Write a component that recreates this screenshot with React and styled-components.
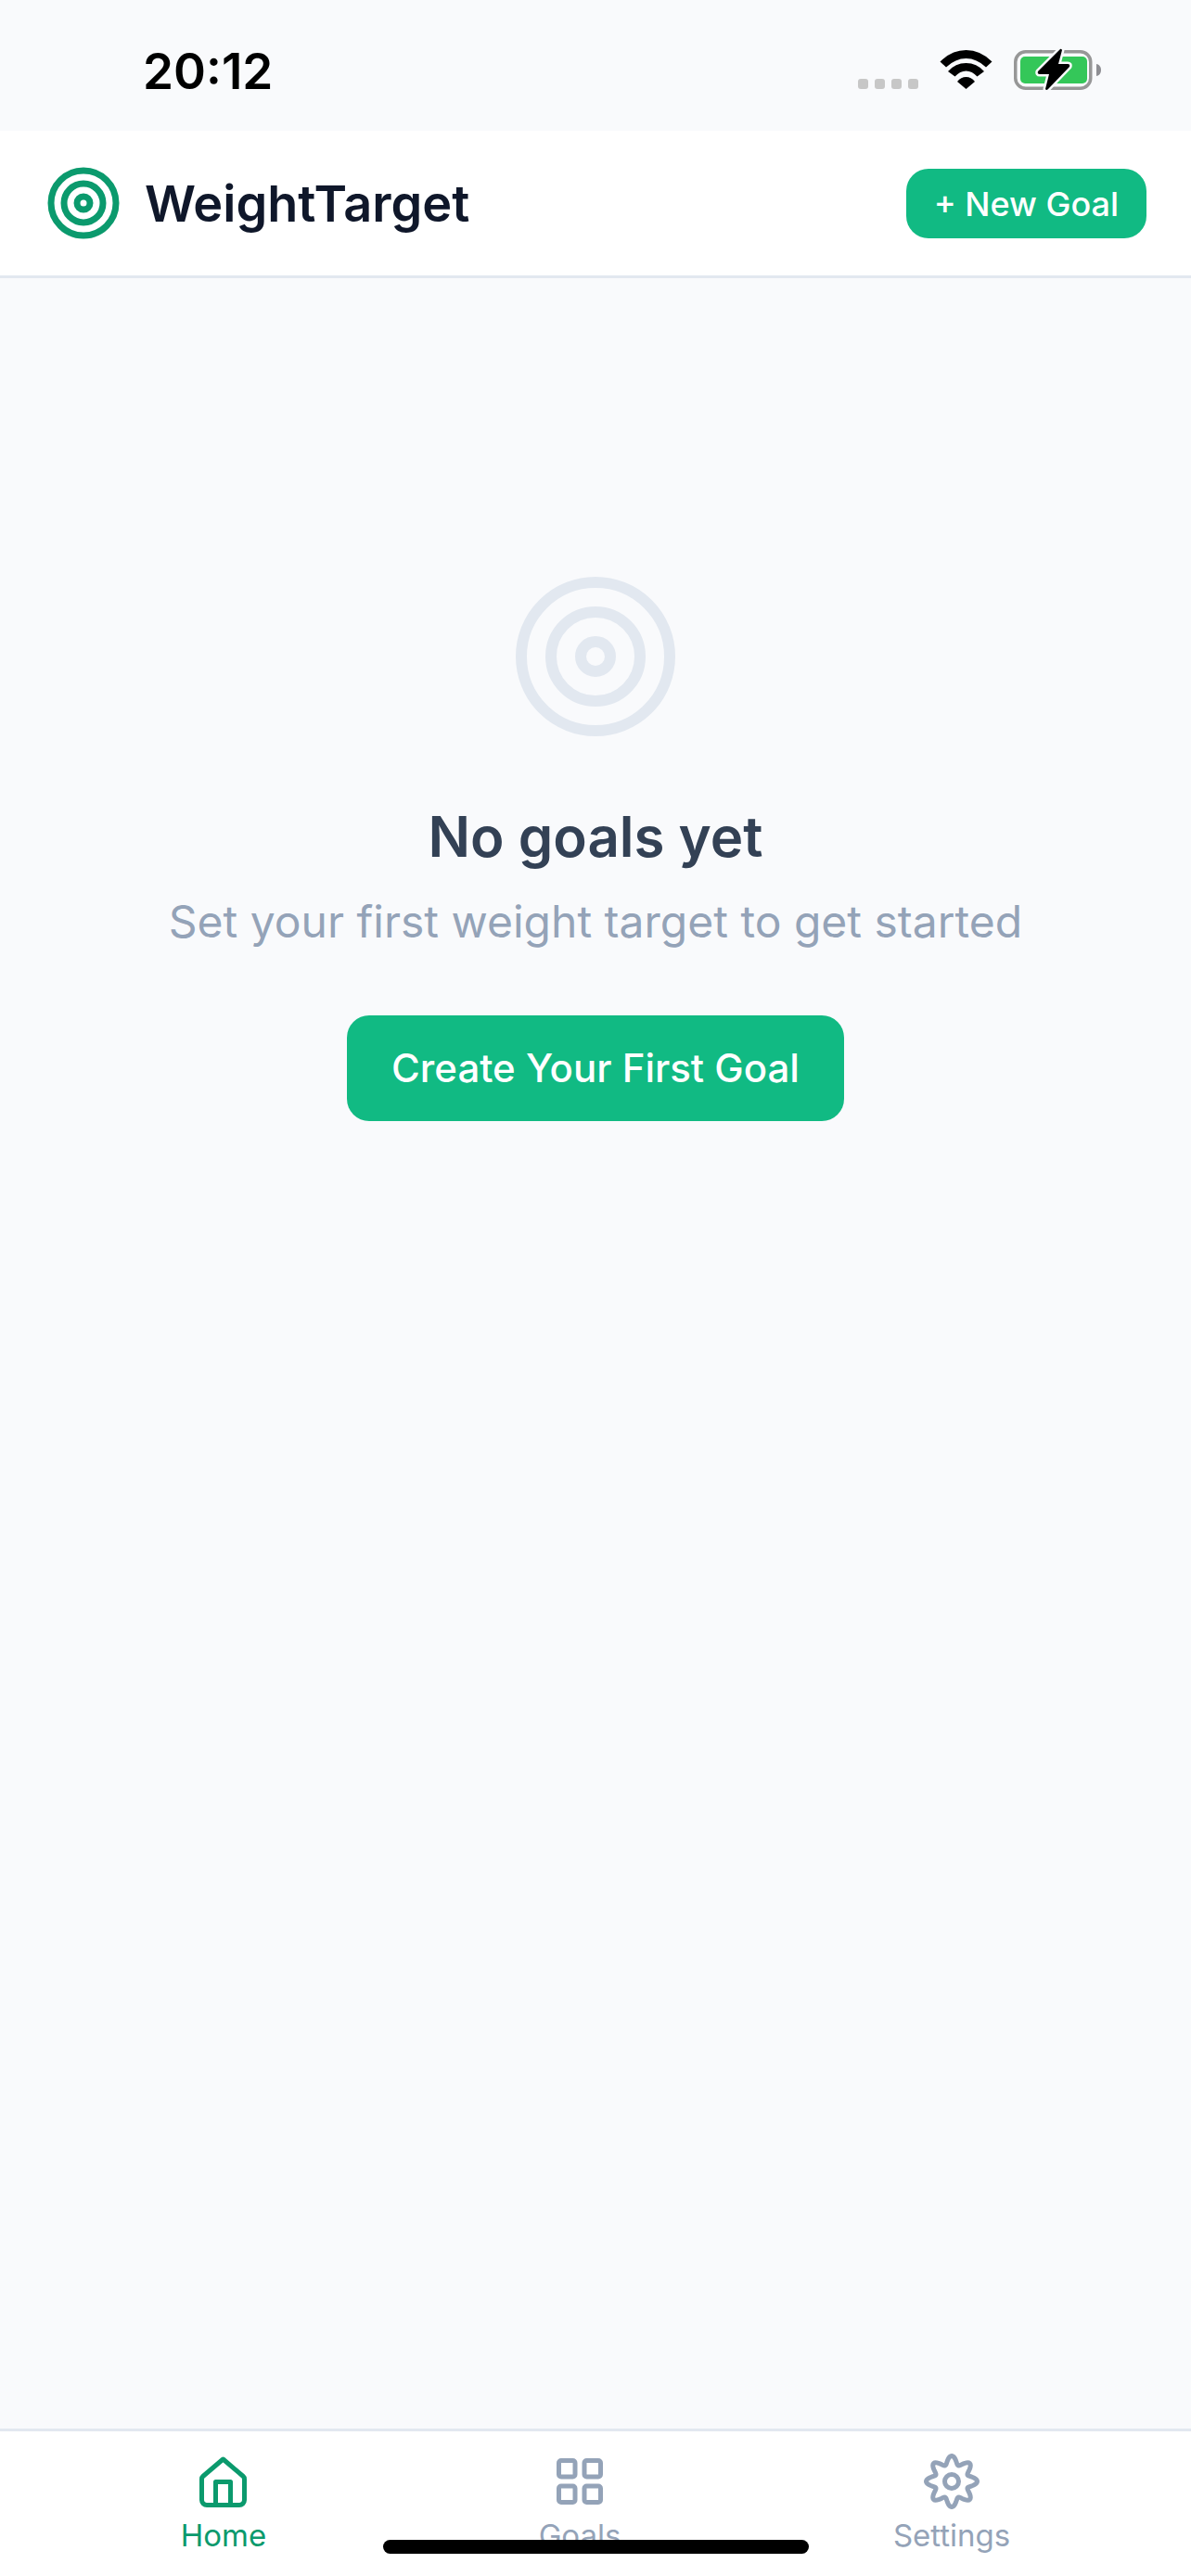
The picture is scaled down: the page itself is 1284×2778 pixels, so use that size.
import React from 'react'
import styled, { createGlobalStyle } from 'styled-components'
import { Target, LayoutGrid } from 'lucide-react'

const GlobalStyle = createGlobalStyle`
html, body {
    margin: 0;
    padding: 0;
    background: #f9fafc;
}
body {
    font-family: Inter, "Liberation Sans", sans-serif;
}
`

const Screen = styled.div`
position: relative;
display: flex;
flex-direction: column;
width: 1284px;
height: 2778px;
overflow: hidden;
background: #f9fafc;
`

const StatusBar = styled.div`
display: flex;
align-items: flex-start;
justify-content: space-between;
height: 141px;
box-sizing: border-box;
padding: 46px 97px 0 154px;
`

const Clock = styled.span`
font-size: 53px;
line-height: 62px;
font-weight: 600;
color: #000;
`

const StatusIcons = styled.div`
display: flex;
align-items: flex-end;
padding-top: 5px;
`

const Dots = styled.div`
display: flex;
gap: 7px;
margin-right: 23px;
margin-bottom: 2px;
`

const Dot = styled.i`
display: block;
width: 11px;
height: 11px;
border-radius: 3px;
background: #c7c7c7;
`

const WifiIcon = styled.svg`
margin-right: 23px;
margin-bottom: 2px;
`

const Header = styled.header`
display: flex;
align-items: center;
justify-content: space-between;
height: 159px;
box-sizing: border-box;
padding: 0 48px;
background: #fff;
border-bottom: 3px solid #e2e8f0;
`

const Brand = styled.div`
display: flex;
align-items: center;
gap: 24px;
`

const BrandName = styled.h1`
margin: 0;
padding-top: 2px;
font-size: 54px;
line-height: 64px;
font-weight: 600;
color: #0f172a;
`

const Button = styled.button`
border: 0;
background: #11ba83;
color: #fff;
font-family: inherit;
font-weight: 500;
font-size: ${p => p.$big ? '42px' : '36px'};
line-height: ${p => p.$big ? '54px' : '45px'};
padding: ${p => p.$big ? '30px 48px' : '16px 30px 14px'};
border-radius: 24px;
`

const Main = styled.main`
flex: 1;
display: flex;
flex-direction: column;
align-items: center;
padding-top: 312px;
`

const EmptyTitle = styled.h2`
margin: 62px 0 0;
font-size: 60px;
line-height: 72px;
font-weight: 600;
color: #334155;
`

const EmptyText = styled.p`
margin: 26px 0 71px;
font-size: 48px;
line-height: 60px;
font-weight: 400;
color: #94a3b8;
`

const TabBar = styled.nav`
display: flex;
justify-content: space-around;
height: 159px;
box-sizing: border-box;
padding: 24px 48px 0;
background: #fff;
border-top: 3px solid #e2e8f0;
`

const Tab = styled.div`
display: flex;
flex-direction: column;
align-items: center;
color: ${p => p.$active ? '#0b9a6d' : '#94a3b8'};
`

const TabIcon = styled.div`
display: flex;
align-items: center;
justify-content: center;
height: 60px;
`

const TabLabel = styled.span`
margin-top: 8px;
font-size: 33px;
line-height: 40px;
`

const HomeIndicator = styled.div`
position: absolute;
left: 413px;
bottom: 24px;
width: 459px;
height: 15px;
border-radius: 8px;
background: #000;
`

// gear outline, 8 round teeth
const gearPath = (() => {
    const pts = []
    for (let i = 0; i < 160; i++) {
        const a = (i / 160) * Math.PI * 2
        const r = 23 + 4.5 * Math.cos(8 * a)
        pts.push(`${(30 + r * Math.sin(a)).toFixed(2)} ${(30 - r * Math.cos(a)).toFixed(2)}`)
    }
    return 'M' + pts.join('L') + 'Z'
})()

const Wifi = () => (
    <WifiIcon width="57" height="42" viewBox="0 0 57 42" fill="#000">
        <path d="M0.5 12.5Q13 0 28.5 0T56.5 12.5L50 18.5Q40 9 28.5 9T7 18.5Z" />
        <path d="M9 23Q17 14 28.5 14T48 23L40.5 28.5Q35 22.5 28.5 22.5T16.5 28.5Z" />
        <path d="M19 34Q23 29 28.5 29T38 34L28.5 42Z" />
    </WifiIcon>
)

const Battery = () => (
    <svg width="94" height="47" viewBox="0 0 94 47">
        <rect x="1.75" y="4.75" width="81" height="39.5" rx="11" fill="none" stroke="#979797" strokeWidth="3.5" />
        <rect x="7" y="10" width="72" height="29" rx="5" fill="#34c759" />
        <path d="M89 18c3 .5 5 3 5 6.5s-2 6-5 6.5z" fill="#8e8e93" />
        <path
            d="M50 2 26 26Q25 29 28 29H38L34 45Q35 47 37 45L60 21Q61 18 58 18H48L52 3Q51 1 50 2Z"
            fill="#000"
            stroke="#f9fafc"
            strokeWidth="5"
            strokeLinejoin="round"
            paintOrder="stroke"
        />
    </svg>
)

const HomeGlyph = () => (
    <svg width="51" height="55" viewBox="0 0 51 55" fill="none" stroke="#0b9a6d" strokeWidth="5" strokeLinejoin="round">
        <path d="M25.5 3 3.8 21.5Q2.5 22.6 2.5 24.5V47a5.5 5.5 0 0 0 5.5 5.5H43a5.5 5.5 0 0 0 5.5-5.5V24.5Q48.5 22.6 47.2 21.5z" />
        <path d="M17.5 52.5V27.5h16v25" />
    </svg>
)

const GearGlyph = () => (
    <svg width="60" height="60" viewBox="0 0 60 60" fill="none" stroke="#94a3b8" strokeWidth="5">
        <path d={gearPath} />
        <circle cx="30" cy="30" r="7.5" />
    </svg>
)

const App = () => {
    return (
        <Screen>
            <GlobalStyle />
            <StatusBar>
                <Clock>20:12</Clock>
                <StatusIcons>
                    <Dots><Dot /><Dot /><Dot /><Dot /></Dots>
                    <Wifi />
                    <Battery />
                </StatusIcons>
            </StatusBar>
            <Header>
                <Brand>
                    <Target size={84} color="#0b9a6d" strokeWidth={2} />
                    <BrandName>WeightTarget</BrandName>
                </Brand>
                <Button>+ New Goal</Button>
            </Header>
            <Main>
                <Target size={192} color="#e2e8f0" strokeWidth={1.5} />
                <EmptyTitle>No goals yet</EmptyTitle>
                <EmptyText>Set your first weight target to get started</EmptyText>
                <Button $big>Create Your First Goal</Button>
            </Main>
            <TabBar>
                <Tab $active>
                    <TabIcon><HomeGlyph /></TabIcon>
                    <TabLabel>Home</TabLabel>
                </Tab>
                <Tab>
                    <TabIcon><LayoutGrid size={60} strokeWidth={2} /></TabIcon>
                    <TabLabel>Goals</TabLabel>
                </Tab>
                <Tab>
                    <TabIcon><GearGlyph /></TabIcon>
                    <TabLabel>Settings</TabLabel>
                </Tab>
            </TabBar>
            <HomeIndicator />
        </Screen>
    )
}

export default App
